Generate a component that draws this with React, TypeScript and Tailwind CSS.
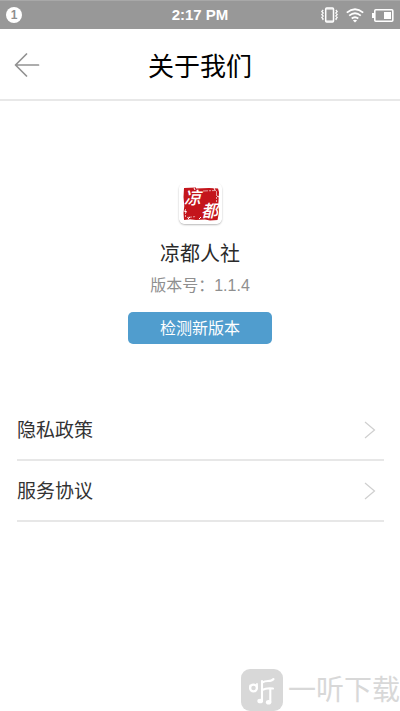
import React from "react";

function StatusBar() {
  return (
    <div className="grid h-[29px] grid-cols-3 items-center border-t border-[#a8a8a8] bg-[#989898] px-1.5 text-white">
      <span className="flex size-4 items-center justify-center rounded-full bg-white text-xs leading-4 font-bold text-[#8f8f8f]">
        1
      </span>
      <time className="text-center font-['Liberation_Sans',Arial,sans-serif] text-[15px] leading-5 font-bold">
        2:17 PM
      </time>
      <div className="flex items-center justify-end gap-2">
        <svg width="17" height="16" viewBox="0 0 17 16" fill="none" stroke="currentColor" aria-hidden="true">
          <rect x="4.7" y="0.9" width="7.8" height="14" rx="1" strokeWidth="1.5" />
          <path d="M5 2h7M5 14h7" strokeWidth="1.2" />
          <path d="M2.2 3 .8 4.5 2.2 6 .8 7.5 2.2 9 .8 10.5 2.2 12 1.4 13M14.8 3l1.4 1.5L14.8 6l1.4 1.5L14.8 9l1.4 1.5-1.4 1.5.8 1" strokeWidth="1.2" />
        </svg>
        <svg width="18" height="15" viewBox="0 0 18 15" fill="none" stroke="currentColor" strokeWidth="1.8" aria-hidden="true">
          <path d="M.8 4.6q8.2-6.8 16.4 0M3.2 7.6q5.8-4.8 11.6 0M5.7 10.5q3.3-2.6 6.6 0" />
          <path d="m6.9 12.4q2.1-1.4 4.2 0L9 14.6z" fill="currentColor" stroke="none" />
        </svg>
        <svg width="22" height="13" viewBox="0 0 22 13" fill="none" aria-hidden="true">
          <rect x="2.8" y=".8" width="18" height="11.4" rx="1" stroke="currentColor" strokeWidth="1.6" />
          <path d="M0 4h2v5H0zM12 3h7v7h-7z" fill="currentColor" />
        </svg>
      </div>
    </div>
  );
}

function Seal() {
  return (
    <svg className="rounded-md shadow-[0_1px_2px_#b8b8b8]" width="43" height="41" viewBox="0 0 43 41" role="img" aria-label="凉都">
      <rect width="43" height="41" rx="5" fill="#fff" />
      <path d="M5 5 17 4.5 17 5.5 30 5 39 5.5 40 9 39.3 22 40 29 38.5 37 31 37.5 26 36.5 17 37 11 36.3 5 37 4.5 30 5.3 23 4.5 14Z" fill="#c4161c" />
      <path d="M24 8 37 7.5M37.5 8v11M6.5 26v9M8 34.5l9-1" stroke="#fff" strokeWidth=".8" strokeDasharray="5 1 2 1" opacity=".75" />
      <path d="M5 28l3 1M9 36l2-2M35 5l1 2M38 13l2 1M15 5l1 2M20 36l2-2" stroke="#fff" strokeWidth="1" />
      <g fill="#fff" fontSize="17" fontWeight="500" fontStyle="italic" fontFamily="'Noto Sans CJK SC',sans-serif">
        <text x="5" y="21">凉</text>
        <text x="22" y="34">都</text>
      </g>
    </svg>
  );
}

function LinkRow({ label }: { label: string }) {
  return (
    <a href="#" className="flex h-[61px] items-center justify-between border-b-2 border-[#e7e7e7] pr-2 text-[19px] leading-7 text-[#333]">
      <span className="pt-0.5">{label}</span>
      <svg width="12" height="18" viewBox="0 0 12 18" fill="none" stroke="#cfcfcf" strokeWidth="1.2" aria-hidden="true">
        <path d="m1 1 9.5 8L1 17" />
      </svg>
    </a>
  );
}

function Watermark() {
  return (
    <div className="pointer-events-none absolute right-0 bottom-0 flex items-end gap-1 text-[28px] leading-10 text-[#d8d8d8]">
      <svg width="43" height="42" viewBox="0 0 43 42" fill="none" aria-hidden="true">
        <rect width="42" height="42" rx="9" fill="#d8d8d8" />
        <g stroke="#fff" strokeLinecap="round">
          <circle cx="12.5" cy="19" r="3.4" strokeWidth="2.3" />
          <path d="M9.2 16.5v1.5M16 15v2.5" strokeWidth="1.8" />
          <path d="M21 12v20M21 13.5q3-1.5 6-1.5 4 0 5.5-2M21 21q5-2.5 11-1.5M29.3 20v13" strokeWidth="2.1" />
        </g>
        <ellipse cx="19.2" cy="32" rx="2.9" ry="2.3" fill="#fff" />
        <ellipse cx="27.6" cy="33.3" rx="2.7" ry="2.3" fill="#fff" />
      </svg>
      <span>一听下载</span>
    </div>
  );
}

export default function App() {
  return (
    <div className="relative min-h-screen bg-white font-['Liberation_Sans','Noto_Sans_CJK_SC',sans-serif]">
      <StatusBar />
      <header className="grid h-[72px] grid-cols-[56px_1fr_56px] items-center border-b-2 border-[#e8e8e8] pt-0.5">
        <button type="button" aria-label="返回" className="flex h-10 items-center pl-3.5">
          <svg width="26" height="24" viewBox="0 0 26 24" fill="none" stroke="#929292" strokeWidth="1.7" strokeLinecap="round" strokeLinejoin="round" aria-hidden="true">
            <path d="M12.5 1 1.5 12l11 11M2 12h22.5" />
          </svg>
        </button>
        <h1 className="pt-1 text-center text-[26px] leading-9 text-black">关于我们</h1>
      </header>
      <main>
        <section className="flex flex-col items-center pt-[82px]">
          <Seal />
          <h2 className="mt-4 text-xl leading-7 text-[#2b2b2b]">凉都人社</h2>
          <p className="mt-1.5 text-base leading-6 text-[#8f8f8f]">版本号：1.1.4</p>
          <button type="button" className="mt-3.5 h-8 w-36 rounded-[5px] bg-[#509dce] pt-0.5 text-base leading-6 text-white">
            检测新版本
          </button>
        </section>
        <nav className="mr-4 ml-[17px] mt-14">
          <LinkRow label="隐私政策" />
          <LinkRow label="服务协议" />
        </nav>
      </main>
      <Watermark />
    </div>
  );
}
